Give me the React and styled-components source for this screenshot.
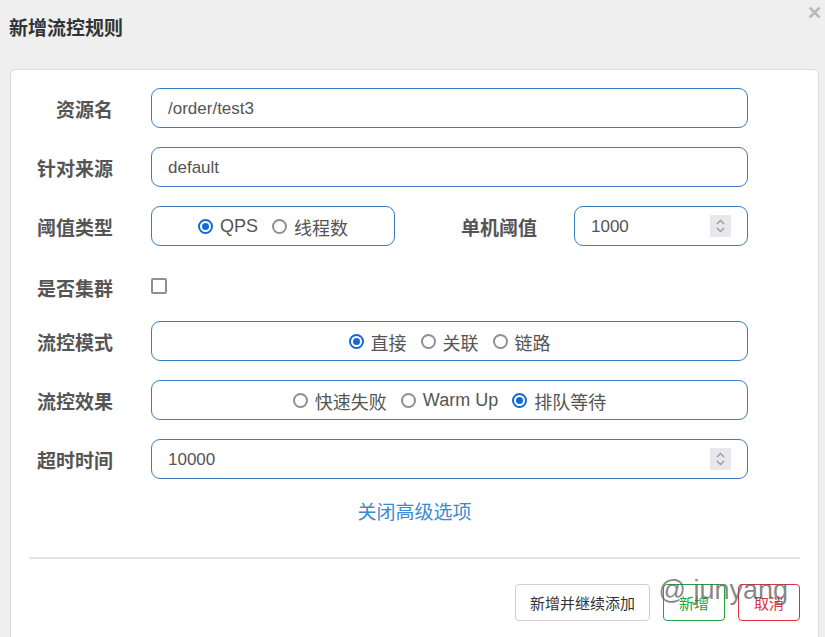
import React from "react";
import styled, { createGlobalStyle } from "styled-components";

const Global = createGlobalStyle`
  html, body { margin: 0; padding: 0; background: #efefef; }
  body { width: 825px; height: 637px; overflow: hidden; font-family: "Liberation Sans", "Noto Sans CJK SC", sans-serif; }
  * { box-sizing: border-box; }
`;

const Dialog = styled.div`
  position: relative;
  width: 825px;
  height: 637px;
  padding: 0 6px 0 10px;
`;

const Header = styled.div`
  height: 69px;
  display: flex;
  align-items: flex-start;
  padding-top: 17px;
  margin-left: -1px;
`;

const Title = styled.h2`
  margin: 0;
  font-size: 19px;
  font-weight: bold;
  color: #333;
  line-height: 23px;
`;

const Close = styled.span`
  position: absolute;
  right: 3px;
  top: 3px;
  font-size: 18px;
  line-height: 20px;
  font-weight: bold;
  color: #b8b8b8;
`;

const Card = styled.div`
  background: #fff;
  border: 1px solid #dcdcdc;
  border-radius: 6px;
  height: 600px;
  padding: 18px 18px 0 18px;
`;

const Form = styled.div`
  display: flex;
  flex-direction: column;
  gap: 19px;
  padding-right: 52px;
`;

const Row = styled.div`
  display: grid;
  grid-template-columns: 84px 1fr;
  column-gap: 38px;
  align-items: center;
  height: ${(p) => (p.$short ? "37px" : "40px")};
  padding-top: ${(p) => (p.$short ? "8px" : "0")};
`;

const Label = styled.label`
  text-align: right;
  font-size: 19px;
  font-weight: bold;
  color: #555;
  white-space: nowrap;
`;

const Box = styled.div`
  height: 40px;
  border: 1px solid #3b7cbf;
  border-radius: 9px;
  display: flex;
  align-items: center;
  font-size: 17px;
  color: #555;
  padding: 1px 16px 0;
  position: relative;
  justify-content: ${(p) => (p.$center ? "center" : "flex-start")};
`;

const Split = styled.div`
  display: grid;
  grid-template-columns: 244px 1fr 174px;
  column-gap: 37px;
  align-items: center;
`;

const RadioGroup = styled.div`
  display: flex;
  align-items: center;
  gap: 14px;
`;

const RadioItem = styled.span`
  display: inline-flex;
  align-items: center;
  gap: 7px;
  color: #555;
  font-size: 18px;
`;

const Dot = styled.span`
  width: 15px;
  height: 15px;
  border-radius: 50%;
  border: ${(p) => (p.$on ? "2px solid #1468d8" : "2px solid #8e8e96")};
  display: inline-flex;
  align-items: center;
  justify-content: center;
  &::after {
    content: "";
    width: 7px;
    height: 7px;
    border-radius: 50%;
    background: ${(p) => (p.$on ? "#1468d8" : "transparent")};
  }
`;

const Check = styled.span`
  width: 16px;
  height: 16px;
  border: 2px solid #8e8e96;
  border-radius: 2px;
  display: inline-block;
`;

const Spin = styled.span`
  position: absolute;
  right: 16px;
  top: 8px;
  width: 21px;
  height: 22px;
  background: #e7e7ec;
  display: flex;
  align-items: center;
  justify-content: center;
`;

const LinkRow = styled.div`
  text-align: center;
  margin-top: 18px;
  font-size: 19px;
  color: #3b8ad4;
`;

const Divider = styled.hr`
  border: none;
  border-top: 2px solid #e3e3e3;
  margin: 33px 0 0 0;
`;

const Footer = styled.div`
  display: flex;
  justify-content: flex-end;
  gap: 13px;
  margin-top: 25px;
  position: relative;
`;

const Btn = styled.button`
  height: 37px;
  padding: 0 ${(p) => (p.$wide ? "14px" : "15px")};
  min-width: 61px;
  border-radius: 4px;
  background: #fff;
  font-family: inherit;
  font-size: 15px;
  border: 1px solid ${(p) => p.$border};
  color: ${(p) => p.$color};
`;

const Watermark = styled.span`
  position: absolute;
  right: 12px;
  top: -9px;
  font-size: 27px;
  color: rgba(95, 95, 95, 0.75);
  font-family: "Liberation Sans", sans-serif;
  pointer-events: none;
`;

const Chevrons = () => (
  <svg width="13" height="16" viewBox="0 0 13 16" fill="none" stroke="#9a9aa2" strokeWidth="1.4">
    <path d="M3 6 L6.5 2.5 L10 6" />
    <path d="M3 10 L6.5 13.5 L10 10" />
  </svg>
);

const Radio = ({ on, children }) => (
  <RadioItem>
    <Dot $on={on} />
    {children}
  </RadioItem>
);

export default function App() {
  return (
    <Dialog>
      <Global />
      <Header>
        <Title>新增流控规则</Title>
      </Header>
      <Close>✕</Close>
      <Card>
        <Form>
          <Row>
            <Label>资源名</Label>
            <Box>/order/test3</Box>
          </Row>
          <Row>
            <Label>针对来源</Label>
            <Box>default</Box>
          </Row>
          <Row>
            <Label>阈值类型</Label>
            <Split>
              <Box $center>
                <RadioGroup>
                  <Radio on>QPS</Radio>
                  <Radio>线程数</Radio>
                </RadioGroup>
              </Box>
              <Label>单机阈值</Label>
              <Box>
                1000
                <Spin><Chevrons /></Spin>
              </Box>
            </Split>
          </Row>
          <Row $short>
            <Label>是否集群</Label>
            <div><Check /></div>
          </Row>
          <Row>
            <Label>流控模式</Label>
            <Box $center>
              <RadioGroup>
                <Radio on>直接</Radio>
                <Radio>关联</Radio>
                <Radio>链路</Radio>
              </RadioGroup>
            </Box>
          </Row>
          <Row>
            <Label>流控效果</Label>
            <Box $center>
              <RadioGroup>
                <Radio>快速失败</Radio>
                <Radio>Warm Up</Radio>
                <Radio on>排队等待</Radio>
              </RadioGroup>
            </Box>
          </Row>
          <Row>
            <Label>超时时间</Label>
            <Box>
              10000
              <Spin><Chevrons /></Spin>
            </Box>
          </Row>
        </Form>
        <LinkRow>关闭高级选项</LinkRow>
        <Divider />
        <Footer>
          <Btn $wide $border="#cfcfcf" $color="#333">新增并继续添加</Btn>
          <Btn $border="#22a33a" $color="#22a33a">新增</Btn>
          <Btn $border="#e0303e" $color="#e0303e">取消</Btn>
          <Watermark>@ junyang</Watermark>
        </Footer>
      </Card>
    </Dialog>
  );
}
